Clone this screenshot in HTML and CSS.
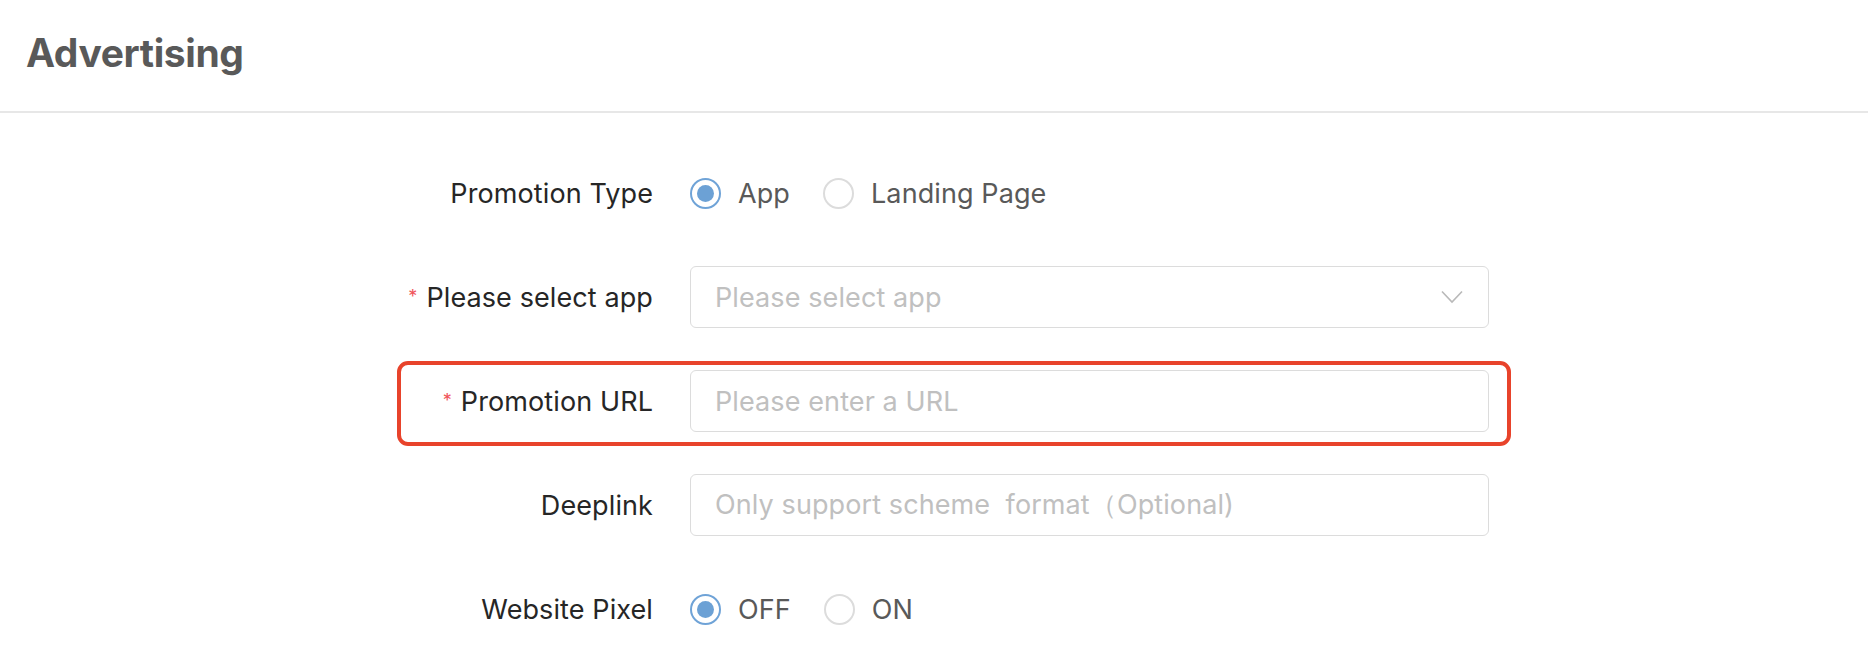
FILE: index.html
```html
<!DOCTYPE html>
<html lang="en">
<head>
<meta charset="utf-8">
<title>Advertising</title>
<link rel="stylesheet" href="styles.css">
</head>
<body>
<header class="page-header">
  <h1 class="page-title">Advertising</h1>
</header>
<main class="form">
  <div class="row">
    <label class="label">Promotion Type</label>
    <div class="control radios">
      <span class="radio checked"><span class="dot"></span></span><span class="radio-text">App</span>
      <span class="radio"></span><span class="radio-text">Landing Page</span>
    </div>
  </div>
  <div class="row">
    <label class="label"><span class="req">*</span>Please select app</label>
    <div class="control input select">
      <span class="placeholder">Please select app</span>
      <svg class="chevron" width="22" height="14" viewBox="0 0 22 14"><path d="M1 1.5 L11 12 L21 1.5" fill="none" stroke="#b9b9b9" stroke-width="1.6"/></svg>
    </div>
  </div>
  <div class="row highlighted">
    <label class="label"><span class="req">*</span>Promotion URL</label>
    <div class="control input">
      <span class="placeholder">Please enter a URL</span>
    </div>
    <div class="highlight"></div>
  </div>
  <div class="row">
    <label class="label">Deeplink</label>
    <div class="control input">
      <span class="placeholder">Only support scheme&nbsp; format（Optional)</span>
    </div>
  </div>
  <div class="row">
    <label class="label">Website Pixel</label>
    <div class="control radios">
      <span class="radio checked"><span class="dot"></span></span><span class="radio-text">OFF</span>
      <span class="radio"></span><span class="radio-text">ON</span>
    </div>
  </div>
</main>
</body>
</html>
```
FILE: styles.css
```css
html, body {
  margin: 0;
  padding: 0;
  background: #ffffff;
  font-family: Inter, "Noto Sans", "Liberation Sans", sans-serif;
}

.page-header {
  height: 111px;
  border-bottom: 2px solid #e7e7e7;
  display: flex;
  align-items: center;
  padding-left: 26px;
  box-sizing: content-box;
}

.page-title {
  margin: 0;
  font-size: 39px;
  font-weight: 700;
  color: #595959;
  letter-spacing: -0.4px;
  line-height: 1;
  padding-bottom: 6px;
}

.form {
  width: 1114px;
  margin-left: 397px;
  padding-top: 49px;
}

.row {
  position: relative;
  display: flex;
  align-items: center;
  height: 62px;
  margin-bottom: 42px;
}

.label {
  width: 256px;
  flex: none;
  text-align: right;
  font-size: 27px;
  letter-spacing: 0.1px;
  color: #262626;
  margin-right: 37px;
  white-space: nowrap;
}

.req {
  color: #f0545a;
  font-size: 18px;
  margin-right: 9px;
  position: relative;
  top: -4px;
}

.control {
  width: 799px;
  flex: none;
  box-sizing: border-box;
}

.input {
  height: 62px;
  border: 1.5px solid #dcdcdc;
  border-radius: 6px;
  display: flex;
  align-items: center;
  padding-left: 24px;
  padding-right: 24px;
}

.placeholder {
  font-size: 27px;
  letter-spacing: 0.1px;
  color: #c0c0c0;
  flex: 1;
  white-space: nowrap;
}

.chevron {
  flex: none;
  margin-right: 1px;
}

.radios {
  display: flex;
  align-items: center;
}

.radio {
  width: 31px;
  height: 31px;
  box-sizing: border-box;
  border: 2px solid #dcdcdc;
  border-radius: 50%;
  display: flex;
  align-items: center;
  justify-content: center;
  flex: none;
}

.radio.checked {
  border-color: #6fa3d7;
}

.dot {
  width: 17px;
  height: 17px;
  border-radius: 50%;
  background: #6ca1d5;
}

.radio-text {
  font-size: 27px;
  letter-spacing: 0.1px;
  color: #595959;
  margin-left: 17px;
  margin-right: 33px;
}

.highlight {
  position: absolute;
  left: 0;
  right: 0;
  top: -9px;
  bottom: -14px;
  border: 4px solid #e8432b;
  border-radius: 11px;
  pointer-events: none;
}
```
